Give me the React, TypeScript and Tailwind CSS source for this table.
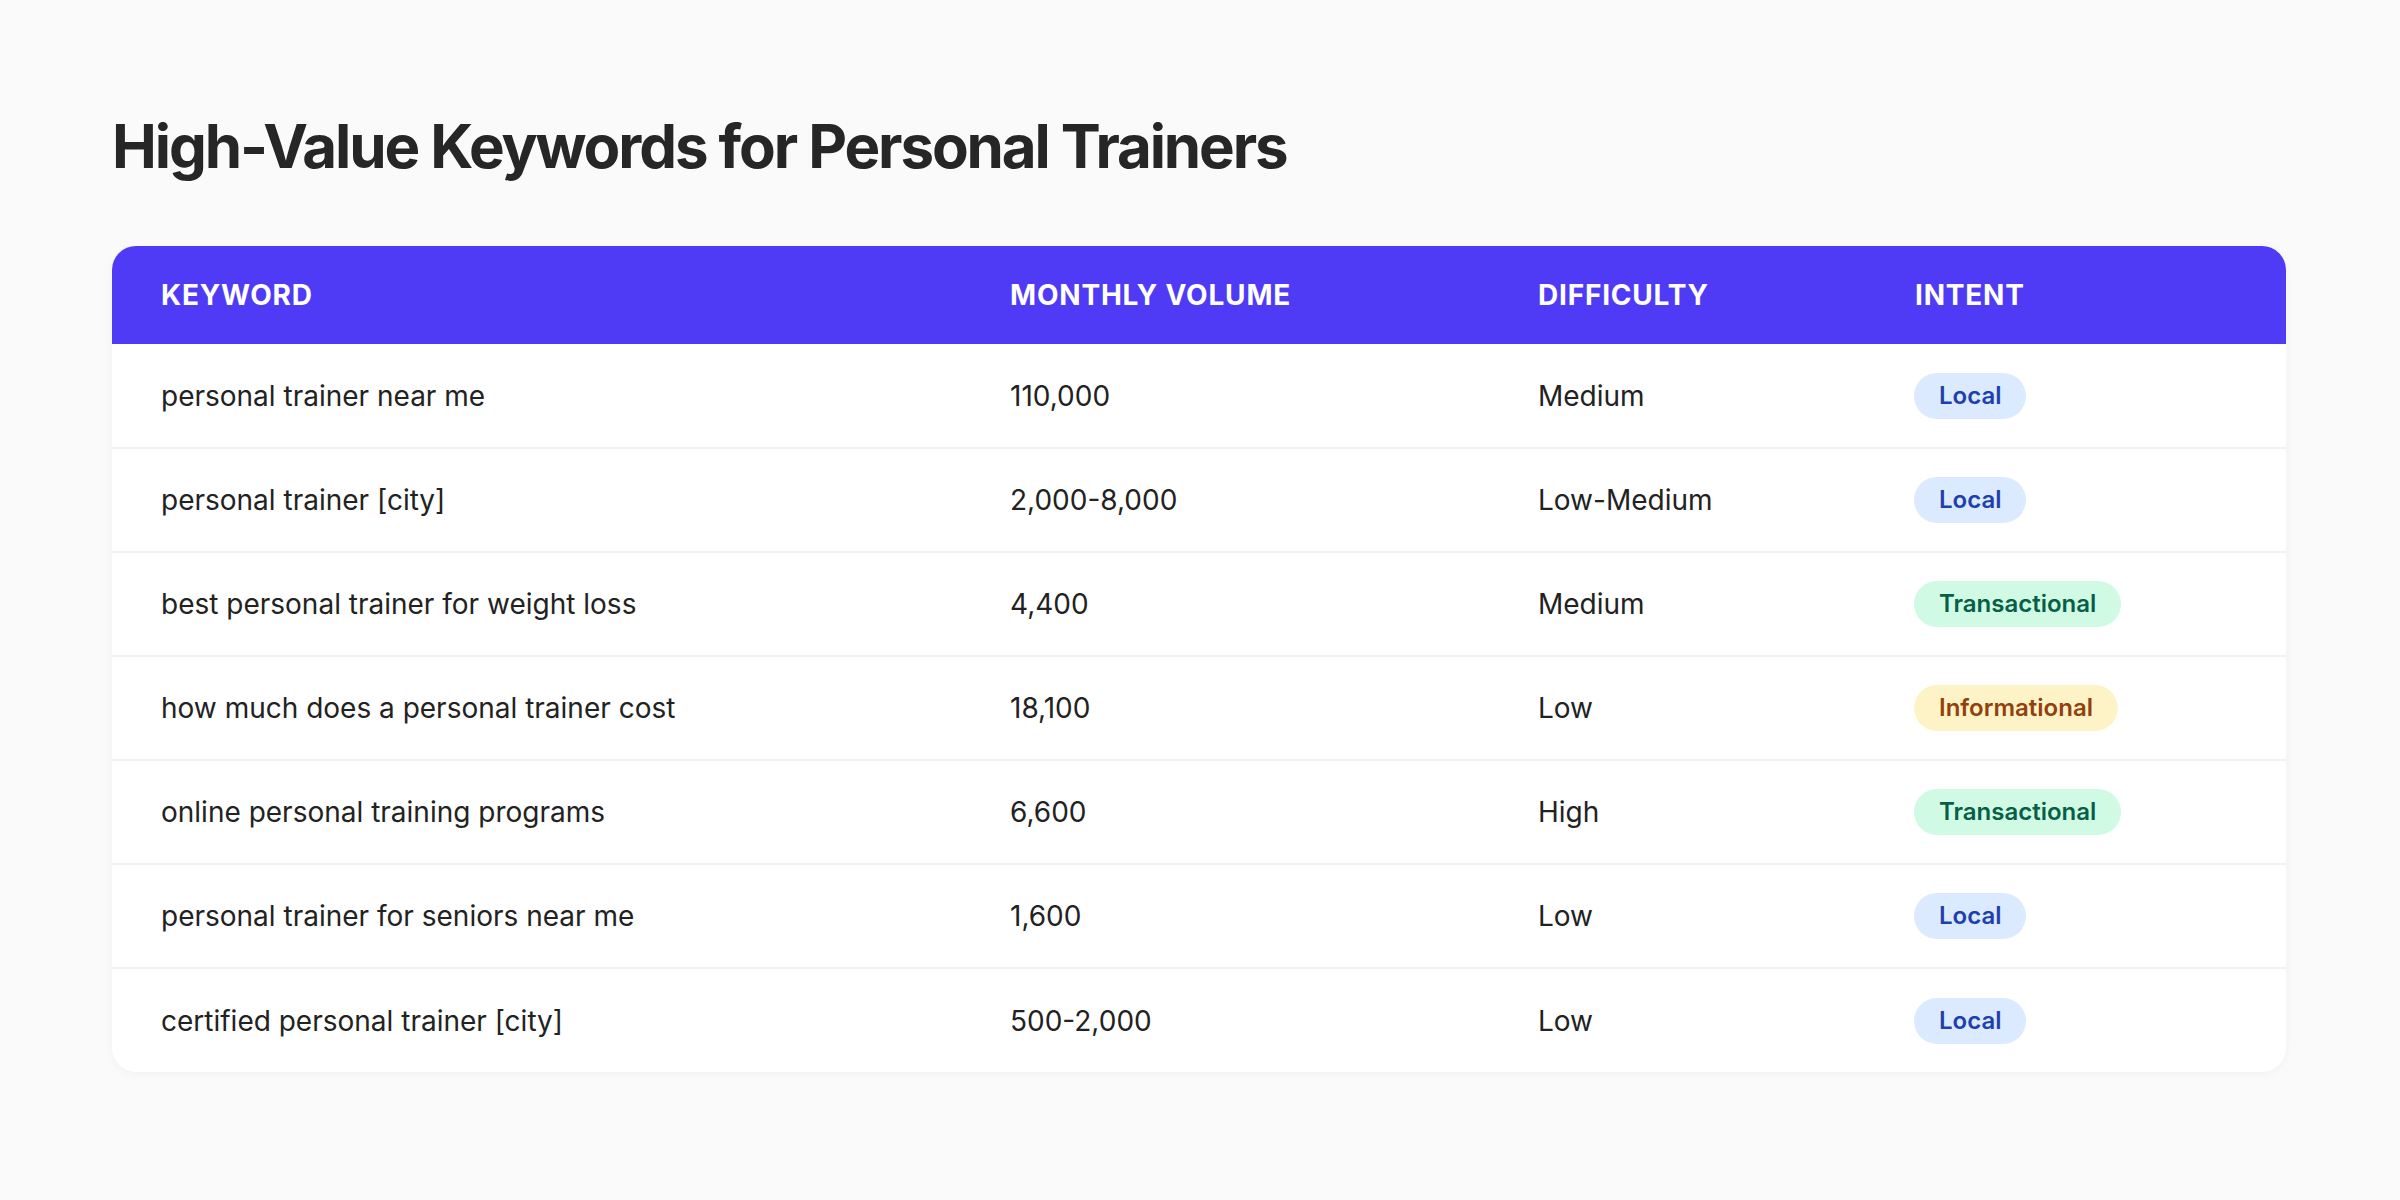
const rows = [
  { keyword: "personal trainer near me", volume: "110,000", difficulty: "Medium", intent: "Local" },
  { keyword: "personal trainer [city]", volume: "2,000-8,000", difficulty: "Low-Medium", intent: "Local" },
  { keyword: "best personal trainer for weight loss", volume: "4,400", difficulty: "Medium", intent: "Transactional" },
  { keyword: "how much does a personal trainer cost", volume: "18,100", difficulty: "Low", intent: "Informational" },
  { keyword: "online personal training programs", volume: "6,600", difficulty: "High", intent: "Transactional" },
  { keyword: "personal trainer for seniors near me", volume: "1,600", difficulty: "Low", intent: "Local" },
  { keyword: "certified personal trainer [city]", volume: "500-2,000", difficulty: "Low", intent: "Local" },
];

const badgeStyles: Record<string, string> = {
  Local: "bg-[#dbeafe] text-[#1e40af]",
  Transactional: "bg-[#d1fae5] text-[#065f46]",
  Informational: "bg-[#fef3c7] text-[#92400e]",
};

export default function App() {
  return (
    <div className="min-h-screen w-full bg-[#fafafa] font-['Inter',sans-serif] text-[#222222]">
      <div className="px-[112px] pt-[110px]">
        <h1 className="text-[60px] font-bold leading-[72px] tracking-[-2.1px] text-[#262626]">
          High-Value Keywords for Personal Trainers
        </h1>

        <div className="mt-[64px] w-[2174px] overflow-hidden rounded-[24px] bg-white shadow-[0_2px_10px_rgba(0,0,0,0.04)]">
          <table className="w-full table-fixed border-collapse">
            <colgroup>
              <col className="w-[855px]" />
              <col className="w-[528px]" />
              <col className="w-[377px]" />
              <col className="w-[414px]" />
            </colgroup>
            <thead>
              <tr className="h-[98px] bg-[#4f3bf6] text-left text-[28px] font-bold tracking-[0.8px] text-white">
                <th className="pl-[49px] pr-[43px]">KEYWORD</th>
                <th className="px-[43px]">MONTHLY VOLUME</th>
                <th className="px-[43px]">DIFFICULTY</th>
                <th className="px-[43px]">INTENT</th>
              </tr>
            </thead>
            <tbody>
              {rows.map((row, i) => (
                <tr
                  key={row.keyword}
                  className={`h-[104px] text-[28px] ${i < rows.length - 1 ? "border-b-2 border-[#f2f2f2]" : ""}`}
                >
                  <td className="pl-[49px] pr-[43px]">{row.keyword}</td>
                  <td className="px-[43px]">{row.volume}</td>
                  <td className="px-[43px]">{row.difficulty}</td>
                  <td className="px-[42px]">
                    <span
                      className={`inline-flex h-[46px] items-center rounded-full px-[25px] text-[24px] font-semibold ${badgeStyles[row.intent]}`}
                    >
                      {row.intent}
                    </span>
                  </td>
                </tr>
              ))}
            </tbody>
          </table>
        </div>
      </div>
    </div>
  );
}
